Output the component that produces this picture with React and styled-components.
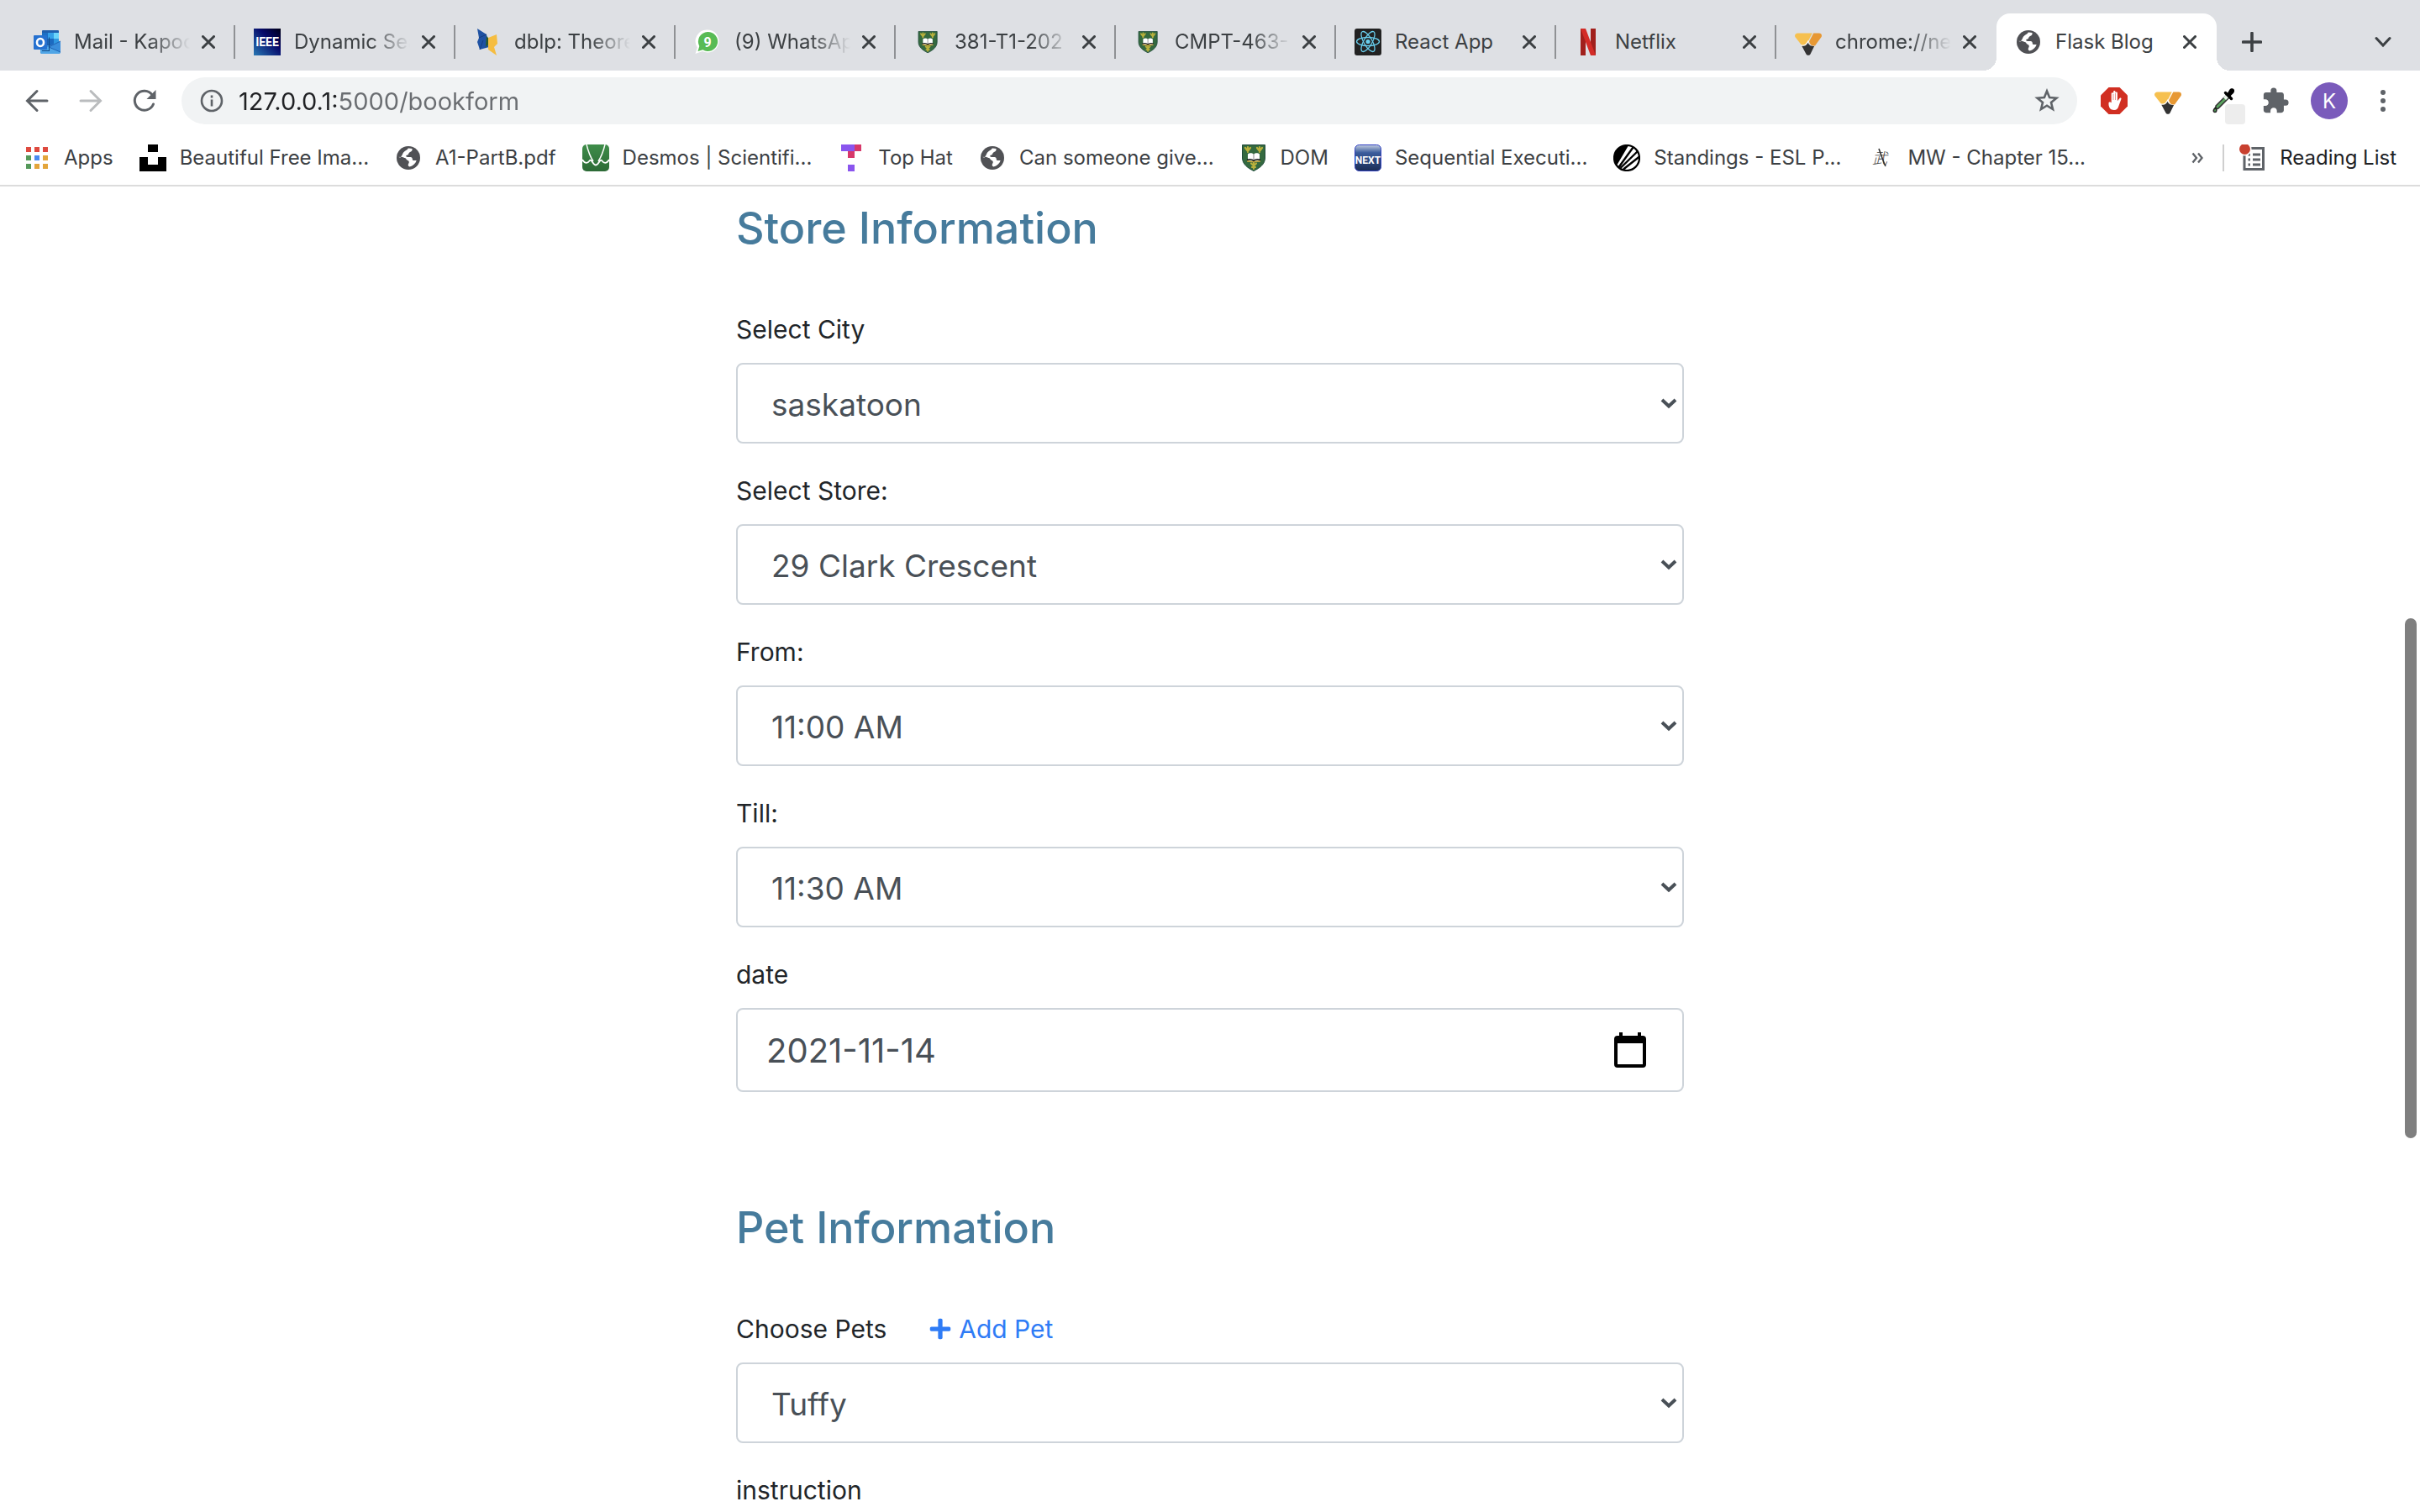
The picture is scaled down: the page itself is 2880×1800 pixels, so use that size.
import React from 'react';
import styled, { createGlobalStyle, css } from 'styled-components';
import { FaHandPaper, FaPlus } from 'react-icons/fa';
import { MdExtension } from 'react-icons/md';

const color = {
  strip: '#dee0e4',
  ink: '#3c4043',
  icon: '#5f6368',
  field: '#f1f3f4',
  heading: '#467b9c',
  label: '#212529',
  input: '#495057',
  border: '#ced4da',
  link: '#2f7cf6',
};

const GlobalStyle = createGlobalStyle`
  *, *::before, *::after { box-sizing: border-box; }
  body {
    margin: 0;
    background: #fff;
    color: ${color.label};
    font-family: Inter, "Liberation Sans", sans-serif;
  }
  button, input, select, textarea { font: inherit; }
  svg { display: block; flex: none; }
`;

/* ---------- browser window ---------- */

const Window = styled.div`
  display: flex;
  flex-direction: column;
  height: 100vh;
  overflow: hidden;
`;

const TabStrip = styled.nav`
  display: flex;
  align-items: stretch;
  height: 84px;
  padding: 16px 16px 0 18px;
  background: ${color.strip};
`;

const activeTab = css`
  position: relative;
  background: #fff;
  border-radius: 16px 16px 0 0;

  &::before,
  &::after {
    content: '';
    position: absolute;
    bottom: 0;
    width: 16px;
    height: 16px;
  }
  &::before {
    right: 100%;
    background: radial-gradient(circle at 0 0, transparent 16px, #fff 16px);
  }
  &::after {
    left: 100%;
    background: radial-gradient(circle at 100% 0, transparent 16px, #fff 16px);
  }
`;

const TabItem = styled.div`
  display: flex;
  align-items: center;
  flex: 0 1 262px;
  min-width: 0;
  padding-left: 22px;
  ${(p) => p.$active && activeTab}
`;

const TabTitle = styled.span`
  flex: 1;
  min-width: 0;
  margin: 0 6px 0 16px;
  overflow: hidden;
  white-space: nowrap;
  font-size: 24px;
  line-height: 32px;
  color: ${color.ink};
  ${(p) => p.$fade && css`mask-image: linear-gradient(to left, transparent, #000 48px);`}
`;

const TabDivider = styled.span`
  width: 2px;
  height: 40px;
  margin-left: 14px;
  background: ${(p) => (p.$hidden ? 'transparent' : '#8f9194')};
`;

const IconButton = styled.button`
  display: grid;
  place-items: center;
  flex: none;
  width: ${(p) => p.$size}px;
  height: ${(p) => p.$size}px;
  padding: 0;
  border: 0;
  border-radius: 50%;
  background: none;
  color: ${(p) => p.$color || color.icon};
`;

const StripButton = styled(IconButton)`
  align-self: center;
  margin-left: ${(p) => (p.$end ? 'auto' : '14px')};
`;

const Toolbar = styled.div`
  display: flex;
  align-items: center;
  gap: 8px;
  height: 72px;
  padding: 0 16px;
`;

const AddressBar = styled.div`
  display: flex;
  align-items: center;
  flex: 1;
  height: 56px;
  margin: 0 8px;
  padding: 0 8px 0 22px;
  border-radius: 28px;
  background: ${color.field};
`;

const AddressInput = styled.input`
  flex: 1;
  min-width: 0;
  height: 40px;
  margin-left: 18px;
  padding: 0;
  border: 0;
  outline: 0;
  font-size: 29px;
  color: transparent;
  background: linear-gradient(90deg, #202124 118px, #6a6d71 118px);
  background-clip: text;
`;

const Avatar = styled.span`
  display: grid;
  place-items: center;
  width: 44px;
  height: 44px;
  border-radius: 50%;
  background: #7a5bbb;
  color: #fff;
  font-size: 24px;
`;

const BookmarkBar = styled.nav`
  display: flex;
  align-items: center;
  gap: 31px;
  height: 66px;
  padding: 0 28px;
  border-bottom: 2px solid #dcdcdc;
`;

const Bookmark = styled.a`
  display: flex;
  align-items: center;
  gap: 16px;
  flex: none;
  color: ${(p) => (p.$dark ? '#202124' : color.ink)};
  font-size: 24px;
  line-height: 32px;
  text-decoration: none;
  white-space: nowrap;
`;

const BarEnd = styled.div`
  display: flex;
  align-items: center;
  gap: 18px;
  margin-left: auto;
`;

const BarDivider = styled.span`
  width: 2px;
  height: 32px;
  background: #cfcfcf;
`;

/* ---------- booking page ---------- */

const Page = styled.main`
  position: relative;
  flex: 1;
  min-height: 0;
  overflow: hidden;
`;

const ScrollThumb = styled.div`
  position: absolute;
  top: 32.6%;
  right: 4px;
  width: 14px;
  height: 39.2%;
  border-radius: 7px;
  background: #7f7f7f;
`;

const Form = styled.form`
  width: 100%;
  max-width: 1128px;
  margin: 0 auto;
  padding-top: 16px;
`;

const Section = styled.section`
  display: flow-root;
  & + & { margin-top: 96px; }
`;

const SectionTitle = styled.h3`
  margin: 0 0 62px;
  color: ${color.heading};
  font-size: 52px;
  font-weight: 500;
  line-height: 68px;
`;

const Group = styled.div`
  margin-bottom: 32px;
`;

const LabelRow = styled.div`
  display: flex;
  align-items: center;
  gap: 50px;
  margin-bottom: 16px;
  font-size: 30px;
  line-height: 48px;
`;

const AddLink = styled.a`
  display: flex;
  align-items: center;
  gap: 8px;
  color: ${color.link};
  text-decoration: none;
`;

const Control = styled.div`
  position: relative;
  display: flex;
  align-items: center;
  height: ${(p) => (p.$tall ? 100 : 96)}px;
  border: 2px solid ${color.border};
  border-radius: 8px;
  background: #fff;
  color: ${color.input};
`;

const Select = styled.select`
  appearance: none;
  width: 100%;
  height: 100%;
  padding: 2px 40px 0;
  border: 0;
  outline: 0;
  background: none;
  color: inherit;
  font-size: 37px;
`;

const SelectArrow = styled.svg`
  position: absolute;
  right: 6px;
  pointer-events: none;
`;

const DateInput = styled.input`
  flex: 1;
  min-width: 0;
  height: 100%;
  padding: 0 0 0 34px;
  border: 0;
  outline: 0;
  background: none;
  color: inherit;
  font-size: 40px;
`;

const CalendarButton = styled(IconButton)`
  margin-right: 38px;
  border-radius: 0;
`;

const Notes = styled.textarea`
  display: block;
  width: 100%;
  height: 96px;
  padding: 16px 32px;
  border: 2px solid ${color.border};
  border-radius: 8px;
`;

/* ---------- icons ---------- */

const Svg = ({ size = 32, box = 32, children, ...rest }) => (
  <svg width={size} height={size} viewBox={`0 0 ${box} ${box}`} fill="none" aria-hidden="true" {...rest}>
    {children}
  </svg>
);

const logoText = { fontFamily: 'Roboto, "Liberation Sans", sans-serif', textAnchor: 'middle', fill: '#fff' };

const Outlook = () => (
  <Svg>
    <rect x="10" y="2" width="20" height="24" rx="1" fill="#1f5fae" />
    <rect x="10" y="5" width="7" height="7" fill="#1b6fc4" />
    <rect x="17" y="5" width="7" height="7" fill="#35a0e8" />
    <rect x="24" y="5" width="6" height="7" fill="#6bd5fb" />
    <rect x="17" y="12" width="7" height="7" fill="#1c6ac0" />
    <rect x="24" y="12" width="6" height="7" fill="#2f97e0" />
    <path d="M8 20h12l12-5v13a2 2 0 0 1-2 2H10a2 2 0 0 1-2-2z" fill="#3a8edb" />
    <path d="M18 22l14 6-2 2H10a2 2 0 0 1-2-2v-6z" fill="#4fa5e6" />
    <path d="M18 22l14-7M18 22l14 6" stroke="#1f64b4" strokeWidth="1" />
    <path d="M10 26h8V10l1 1v16h-9z" fill="#124a86" />
    <rect x="0" y="8" width="16" height="17" rx="1" fill="#2571d0" />
    <ellipse cx="8" cy="16.500" rx="4" ry="4.500" stroke="#fff" strokeWidth="2.600" />
  </Svg>
);

const Ieee = () => (
  <Svg>
    <defs>
      <linearGradient id="ieee" x1="1" y1="0" x2="0" y2="1">
        <stop offset="0" stopColor="#000018" />
        <stop offset=".4" stopColor="#060a6a" />
        <stop offset="1" stopColor="#2878b4" />
      </linearGradient>
    </defs>
    <rect width="32" height="32" fill="url(#ieee)" />
    <text x="16" y="21" fontSize="14" fontWeight="700" {...logoText}>IEEE</text>
  </Svg>
);

const Dblp = () => (
  <Svg>
    <path d="M4 0l11 7 3 15-11 3-3-9 2-5z" fill="#1f52a3" />
    <path d="M6 11l9-4M7 25l4-11" stroke="#17407f" />
    <path d="M17 11l10-4 1 11-4 4 3 10-10-7z" fill="#f5bd41" />
    <path d="M15 9l2 2v8l-3 3z" fill="#2c5b2c" />
  </Svg>
);

const WhatsApp = () => (
  <Svg>
    <path d="M16 1.500a13.500 13.500 0 1 1-6 25.600L1.500 30l2.400-7.600A13.500 13.500 0 0 1 16 1.500z" fill="#fff" />
    <path d="M16 4a11.500 11.500 0 1 1-5.500 21.200L4.500 27l1.800-6A11.500 11.500 0 0 1 16 4z" fill="#58bb55" />
    <text x="16" y="21.500" fontSize="16" fontWeight="700" {...logoText}>9</text>
  </Svg>
);

const Shield = ({ size = 32 }) => (
  <Svg size={size}>
    <path d="M2.500.5h27V16c0 7-6 12-13.500 15.500C8.500 28 2.500 23 2.500 16z" fill="#34693f" stroke="#1f4a3a" />
    <g stroke="#b9b13c" strokeWidth="2.200" strokeLinecap="round">
      <path d="M9 3v6M6 4l3 4 3-4" />
      <path d="M23 3v6M20 4l3 4 3-4" />
      <path d="M16 22v7M13 22.500l3 3 3-3M14 27h4" />
    </g>
    <path d="M9 11.500c3-2 5-1 7 0 2-1 4-2 7 0v8H9z" fill="#fff" />
    <path d="M16 11v8" stroke="#888" />
    <path d="M8 18.500c3-1 6-1 8 1 2-2 5-2 8-1" stroke="#111" strokeWidth="1.500" />
    <path d="M8 20c4 0 6 0 8 1.200 2-1.200 4-1.200 8-1.200" stroke="#c8a63a" strokeWidth="1.500" />
  </Svg>
);

const SmallShield = () => (
  <Svg>
    <g transform="translate(3 3) scale(.82)">
      <Shield />
    </g>
  </Svg>
);

const ReactLogo = () => (
  <Svg>
    <rect width="32" height="32" rx="3" fill="#222" />
    <g stroke="#69cfee" strokeWidth="1.300">
      <ellipse cx="16" cy="15.500" rx="13.500" ry="5" />
      <ellipse cx="16" cy="15.500" rx="13.500" ry="5" transform="rotate(60 16 15.500)" />
      <ellipse cx="16" cy="15.500" rx="13.500" ry="5" transform="rotate(120 16 15.500)" />
    </g>
    <circle cx="16" cy="15.500" r="2.600" fill="#69cfee" />
  </Svg>
);

const Netflix = () => (
  <Svg>
    <rect x="7" width="6" height="32" fill="#a1201c" />
    <rect x="19" width="6" height="32" fill="#a1201c" />
    <rect x="7" width="6" height="32" fill="#d32c27" transform="skewX(20.600)" />
  </Svg>
);

const Pencil = () => (
  <Svg>
    <path d="M3.500 5.500h17.300L13 20.500H8.600L.6 10.300C-.8 8 .7 5.500 3.500 5.500z" fill="#f6c04f" />
    <path d="M22.300 5.500h6.500c2.800 0 4 2.600 2.600 4.800L24 20.500h-2.500c-2 0-4-2.500-4.400-5.200z" fill="#e79833" />
    <path d="M7.500 20c4.700.8 6.500-.8 8.700-5.500" stroke="#fff" strokeWidth="1.500" />
    <path d="M8.300 20.800c4.700.3 5.600-1.300 7.300-4 1.400 3.400 3.600 4.200 7.500 4.200l-4.500 9.300c-1 2-4.200 2-5.200 0z" fill="#333" />
  </Svg>
);

const Globe = () => (
  <Svg>
    <circle cx="16" cy="16" r="14" fill="#505155" />
    <path
      d="M16.500 4.500l4 .6c.4 2.200-.6 3.200-2 3.700-1.500.6-2 1.500-2.400 2.700-.4 1-1.600 1.200-2.700 1.400-.5 1.300.3 2 1.600 2h3.500c1.600 0 2.300 1 2.300 2.500 0 1.200.9 1.700 2.200 1.600h2.700c-1.300 4-4.200 6.500-8.200 7.400-1.500-.4-2-1.400-1.700-2.700.4-1.300 1.500-2.300.7-3.700-.6-1-2-.8-2.600-1.900-.5-.9-1-1.900-2.300-2.100l-6.800-.7c-.1-5 4.500-9.500 11.700-10.800z"
      fill="#fff"
    />
    <path d="M3 14c1-5.500 5-9.300 10-10l2.500 1.500c-2.500 1.800-5.500 3-6.500 6-.5 1.600-1.500 2.800-2.500 3.700z" fill="#505155" />
    <path d="M7.500 14.500l4.500 1.700-1 2.800c-2-.2-3.500-.6-5-1.400z" fill="#505155" />
  </Svg>
);

const AppsGrid = () => {
  const fills = ['#de4a3f', '#de4a3f', '#de4a3f', '#55995a', '#4a8af0', '#e3a53b', '#55995a', '#e3a53b', '#e3a53b'];
  return (
    <Svg>
      {fills.map((f, i) => (
        <rect key={i} x={3 + (i % 3) * 10} y={3 + Math.floor(i / 3) * 10} width="6" height="6" fill={f} />
      ))}
    </Svg>
  );
};

const Unsplash = () => (
  <Svg>
    <path d="M10 0h12v9H10zM0 15h10v9h12v-9h10v17H0z" fill="#000" />
  </Svg>
);

const Desmos = () => (
  <Svg>
    <defs>
      <linearGradient id="desmos" x1="0" y1="0" x2="0" y2="1">
        <stop offset="0" stopColor="#3f8d4a" />
        <stop offset="1" stopColor="#2c6a36" />
      </linearGradient>
    </defs>
    <rect width="32" height="32" rx="5" fill="url(#desmos)" />
    <path d="M5 0c2 8 4 14 8 20M27 0c-2 8-4 14-8 20" stroke="#fff" strokeWidth="1.500" />
    <path d="M0 18c3 5 6 5 9 1 2-2 4 5.500 7 5.500s5-7.500 7-5.500c3 4 6 4 9-1" stroke="#fff" strokeWidth="1.800" />
  </Svg>
);

const TopHat = () => (
  <Svg>
    <path d="M4 0h16v8H4zM12 24h8v8h-8z" fill="#8a55ee" />
    <path d="M20 0h8v8h-8zM12 8h8v8h-8z" fill="#d7386a" />
  </Svg>
);

const Next = () => (
  <Svg>
    <defs>
      <linearGradient id="next" x1="0" y1="0" x2="0" y2="1">
        <stop offset="0" stopColor="#c3cde0" />
        <stop offset=".3" stopColor="#3a5c9c" />
        <stop offset="1" stopColor="#1b2d55" />
      </linearGradient>
    </defs>
    <rect x=".5" y=".5" width="31" height="31" rx="5" fill="url(#next)" stroke="#2f3fc0" />
    <text x="16" y="23" fontSize="12" fontWeight="700" {...logoText}>NEXT</text>
  </Svg>
);

const Esl = () => (
  <Svg>
    <circle cx="16" cy="16" r="15" fill="#fff" stroke="#000" strokeWidth="2.200" />
    <path d="M1 17A15 15 0 0 1 18 1.200L4 25C2 22 1 20 1 17z" fill="#000" />
    <path d="M23.500 3.500L6.500 27M28.500 8.500L8.500 28M31 14.500L12 29.500" stroke="#000" strokeWidth="2.400" />
  </Svg>
);

const Novel = () => (
  <Svg>
    <text x="15" y="23" fontSize="18" textAnchor="middle" fill="#3f3f3f" fontStyle="italic" fontFamily='"Noto Sans CJK SC", sans-serif' fontWeight="300">武</text>
    <path d="M14 5c3 8 5 15 8 21" stroke="#333" strokeWidth="1.600" />
  </Svg>
);

const ReadingIcon = () => (
  <Svg>
    <path d="M6 7v22.500h22.500V4.500H12" stroke={color.icon} strokeWidth="3" />
    <path d="M16 12h9M16 18h9M16 24h9" stroke={color.icon} strokeWidth="3" />
    <path d="M10.500 12h2.500M10.500 18h2.500M10.500 24h2.500" stroke={color.icon} strokeWidth="3" />
    <circle cx="6.500" cy="5.500" r="8" fill="#fff" />
    <circle cx="6.500" cy="5.500" r="6.500" fill="#c8402f" />
  </Svg>
);

const CloseIcon = () => (
  <Svg size={16} box={16}>
    <path d="M1.500 1.500l13 13M14.500 1.500l-13 13" stroke={color.ink} strokeWidth="3" strokeLinecap="round" />
  </Svg>
);

const Arrow = ({ flip }) => (
  <Svg size={28} box={28}>
    <path
      d="M26 14H3M14 2.500L2.500 14 14 25.500"
      stroke="currentColor"
      strokeWidth="3"
      strokeLinecap="round"
      transform={flip ? 'rotate(180 14 14)' : undefined}
    />
  </Svg>
);

const Reload = () => (
  <Svg size={28} box={28}>
    <path d="M24.500 18A11.500 11.500 0 1 1 23 6.800" stroke="currentColor" strokeWidth="3" strokeLinecap="round" />
    <path d="M27.500 1v11h-11z" fill="currentColor" />
  </Svg>
);

const Info = () => (
  <Svg size={28} box={28}>
    <circle cx="14" cy="14" r="12" stroke={color.icon} strokeWidth="2.600" />
    <path d="M14 12.500v8M14 7.500v3" stroke={color.icon} strokeWidth="2.600" />
  </Svg>
);

const Star = () => (
  <Svg size={30} box={30}>
    <path
      d="M15 3.500l3.100 7.600 8.300.6-6.400 5.300 2 8L15 20.700 8 25l2-8-6.400-5.300 8.300-.6z"
      stroke={color.icon}
      strokeWidth="2.600"
    />
  </Svg>
);

const AdBlock = () => (
  <Svg>
    <path d="M9.500 0h13L32 9.500v13L22.500 32h-13L0 22.500v-13z" fill="#d12f22" />
    <path
      d="M9.500 18l1.500-.8 1.700 1V7.500a1.200 1.200 0 0 1 2.400 0V5.200a1.200 1.200 0 0 1 2.400 0v1.600a1.200 1.200 0 0 1 2.400 0v9.500l2.600-3.300c1-1 2.500-.2 1.900 1.100L21.500 22c-1 3.200-2.500 5-5.500 5-4.500 0-6-3-6.500-6z"
      fill="#fff"
    />
    <path d="M15 8v7M17.500 7v8" stroke="#d12f22" strokeWidth=".5" />
  </Svg>
);

const Dropper = () => (
  <Svg size={56} box={56}>
    <rect x="32" y="32" width="24" height="24" rx="4" fill="#ededed" />
    <g transform="translate(16 12)">
      <path d="M5 22L19 8l3 3L8 25l-3 1z" fill="#5aa45f" stroke="#333" strokeWidth="1.500" />
      <path d="M14 12l5-5 3 3-5 5z" fill="#e9f3ea" />
      <path d="M16.500 6.500l7 7" stroke="#000" strokeWidth="3.500" strokeLinecap="round" />
      <path d="M18.500 7.500l3-5c2-2.500 6.500-1 5.500 2.500-.8 2.500-3 3.500-5 6z" fill="#000" />
      <path d="M4.500 24c2 2.500 1.800 5.500-.5 5.500S1.500 27 4.500 24z" fill="#4e9a55" stroke="#222" strokeWidth="1.500" />
    </g>
  </Svg>
);

const Dots = () => (
  <Svg>
    <circle cx="16" cy="6" r="3" fill="currentColor" />
    <circle cx="16" cy="16" r="3" fill="currentColor" />
    <circle cx="16" cy="26" r="3" fill="currentColor" />
  </Svg>
);

const Plus = () => (
  <Svg size={24} box={24}>
    <path d="M12 1.500v21M1.500 12h21" stroke="currentColor" strokeWidth="3.600" strokeLinecap="round" />
  </Svg>
);

const ChevronDown = () => (
  <Svg size={20} box={20}>
    <path d="M2 5.500l8 8.500 8-8.500" stroke="currentColor" strokeWidth="3" strokeLinecap="round" />
  </Svg>
);

const MoreIcon = () => (
  <Svg size={14} box={14}>
    <path d="M1.500 1.500L6 7l-4.500 5.500M8 1.500L12.500 7 8 12.500" stroke={color.icon} strokeWidth="2.400" />
  </Svg>
);

const Calendar = () => (
  <svg width="40" height="44" viewBox="0 0 40 44" aria-hidden="true">
    <path
      fillRule="evenodd"
      d="M7 1h4v4h18V1h4v4h2a4 4 0 0 1 4 4v30a4 4 0 0 1-4 4H5a4 4 0 0 1-4-4V9a4 4 0 0 1 4-4h2zM5 14v25h30V14z"
      fill="#000"
    />
  </svg>
);

/* ---------- data ---------- */

const tabs = [
  { title: 'Mail - Kapoor', Icon: Outlook, fade: true },
  { title: 'Dynamic Sear', Icon: Ieee, fade: true },
  { title: 'dblp: Theore', Icon: Dblp, fade: true },
  { title: '(9) WhatsApp', Icon: WhatsApp, fade: true },
  { title: '381-T1-202', Icon: SmallShield, fade: true },
  { title: 'CMPT-463-', Icon: SmallShield, fade: true },
  { title: 'React App', Icon: ReactLogo },
  { title: 'Netflix', Icon: Netflix },
  { title: 'chrome://ne', Icon: Pencil, fade: true, last: true },
  { title: 'Flask Blog', Icon: Globe, active: true, last: true },
];

const bookmarks = [
  ['Apps', AppsGrid],
  ['Beautiful Free Ima...', Unsplash],
  ['A1-PartB.pdf', Globe],
  ['Desmos | Scientifi...', Desmos],
  ['Top Hat', TopHat],
  ['Can someone give...', Globe],
  ['DOM', Shield],
  ['Sequential Executi...', Next],
  ['Standings - ESL P...', Esl],
  ['MW - Chapter 15...', Novel],
];

const storeFields = [
  ['city', 'Select City', 'saskatoon'],
  ['store', 'Select Store:', '29 Clark Crescent'],
  ['from', 'From:', '11:00 AM'],
  ['till', 'Till:', '11:30 AM'],
];

/* ---------- parts ---------- */

const Tab = ({ title, Icon, fade, active, last }) => (
  <TabItem $active={active}>
    <Icon />
    <TabTitle $fade={fade}>{title}</TabTitle>
    <IconButton type="button" $size={32} aria-label="Close tab"><CloseIcon /></IconButton>
    <TabDivider $hidden={last} />
  </TabItem>
);

const SelectField = ({ id, label, value, extra }) => (
  <Group>
    <LabelRow>
      <label htmlFor={id}>{label}</label>
      {extra}
    </LabelRow>
    <Control>
      <Select id={id} defaultValue={value}>
        <option>{value}</option>
      </Select>
      <SelectArrow width="20" height="14" viewBox="0 0 20 14" fill="none" aria-hidden="true">
        <path d="M2 3l8 7.500L18 3" stroke="currentColor" strokeWidth="4" />
      </SelectArrow>
    </Control>
  </Group>
);

export default function App() {
  return (
    <Window>
      <GlobalStyle />
      <header>
        <TabStrip>
          {tabs.map((t, i) => <Tab key={i} {...t} />)}
          <StripButton type="button" $size={56} $color={color.ink} aria-label="New tab"><Plus /></StripButton>
          <StripButton type="button" $size={56} $end $color={color.ink} aria-label="Search tabs"><ChevronDown /></StripButton>
        </TabStrip>
        <Toolbar>
          <IconButton type="button" $size={56} aria-label="Back"><Arrow /></IconButton>
          <IconButton type="button" $size={56} $color="#babcbe" aria-label="Forward"><Arrow flip /></IconButton>
          <IconButton type="button" $size={56} aria-label="Reload"><Reload /></IconButton>
          <AddressBar>
            <Info />
            <AddressInput aria-label="Address" defaultValue="127.0.0.1:5000/bookform" />
            <IconButton type="button" $size={56} aria-label="Bookmark this page"><Star /></IconButton>
          </AddressBar>
          <IconButton type="button" $size={56} aria-label="Ad blocker"><AdBlock /></IconButton>
          <IconButton type="button" $size={56} aria-label="Notes"><Pencil /></IconButton>
          <IconButton type="button" $size={56} aria-label="Color picker"><Dropper /></IconButton>
          <IconButton type="button" $size={56} aria-label="Extensions"><MdExtension size={34} /></IconButton>
          <IconButton type="button" $size={56} aria-label="Profile"><Avatar>K</Avatar></IconButton>
          <IconButton type="button" $size={56} aria-label="Menu"><Dots /></IconButton>
        </Toolbar>
        <BookmarkBar>
          {bookmarks.map(([title, Icon]) => (
            <Bookmark key={title} href="#"><Icon />{title}</Bookmark>
          ))}
          <BarEnd>
            <IconButton type="button" $size={24} aria-label="More bookmarks"><MoreIcon /></IconButton>
            <BarDivider />
            <Bookmark href="#" $dark><ReadingIcon />Reading List</Bookmark>
          </BarEnd>
        </BookmarkBar>
      </header>

      <Page>
        <Form>
          <Section>
            <SectionTitle>Store Information</SectionTitle>
            {storeFields.map(([id, label, value]) => (
              <SelectField key={id} id={id} label={label} value={value} />
            ))}
            <Group>
              <LabelRow><label htmlFor="date">date</label></LabelRow>
              <Control $tall>
                <DateInput id="date" defaultValue="2021-11-14" />
                <CalendarButton type="button" $size={48} $color="#000" aria-label="Open calendar"><Calendar /></CalendarButton>
              </Control>
            </Group>
          </Section>
          <Section>
            <SectionTitle>Pet Information</SectionTitle>
            <SelectField
              id="pet"
              label="Choose Pets"
              value="Tuffy"
              extra={<AddLink href="#"><FaPlus size={28} />Add Pet</AddLink>}
            />
            <Group>
              <LabelRow><label htmlFor="instruction">instruction</label></LabelRow>
              <Notes id="instruction" />
            </Group>
          </Section>
        </Form>
        <ScrollThumb />
      </Page>
    </Window>
  );
}
